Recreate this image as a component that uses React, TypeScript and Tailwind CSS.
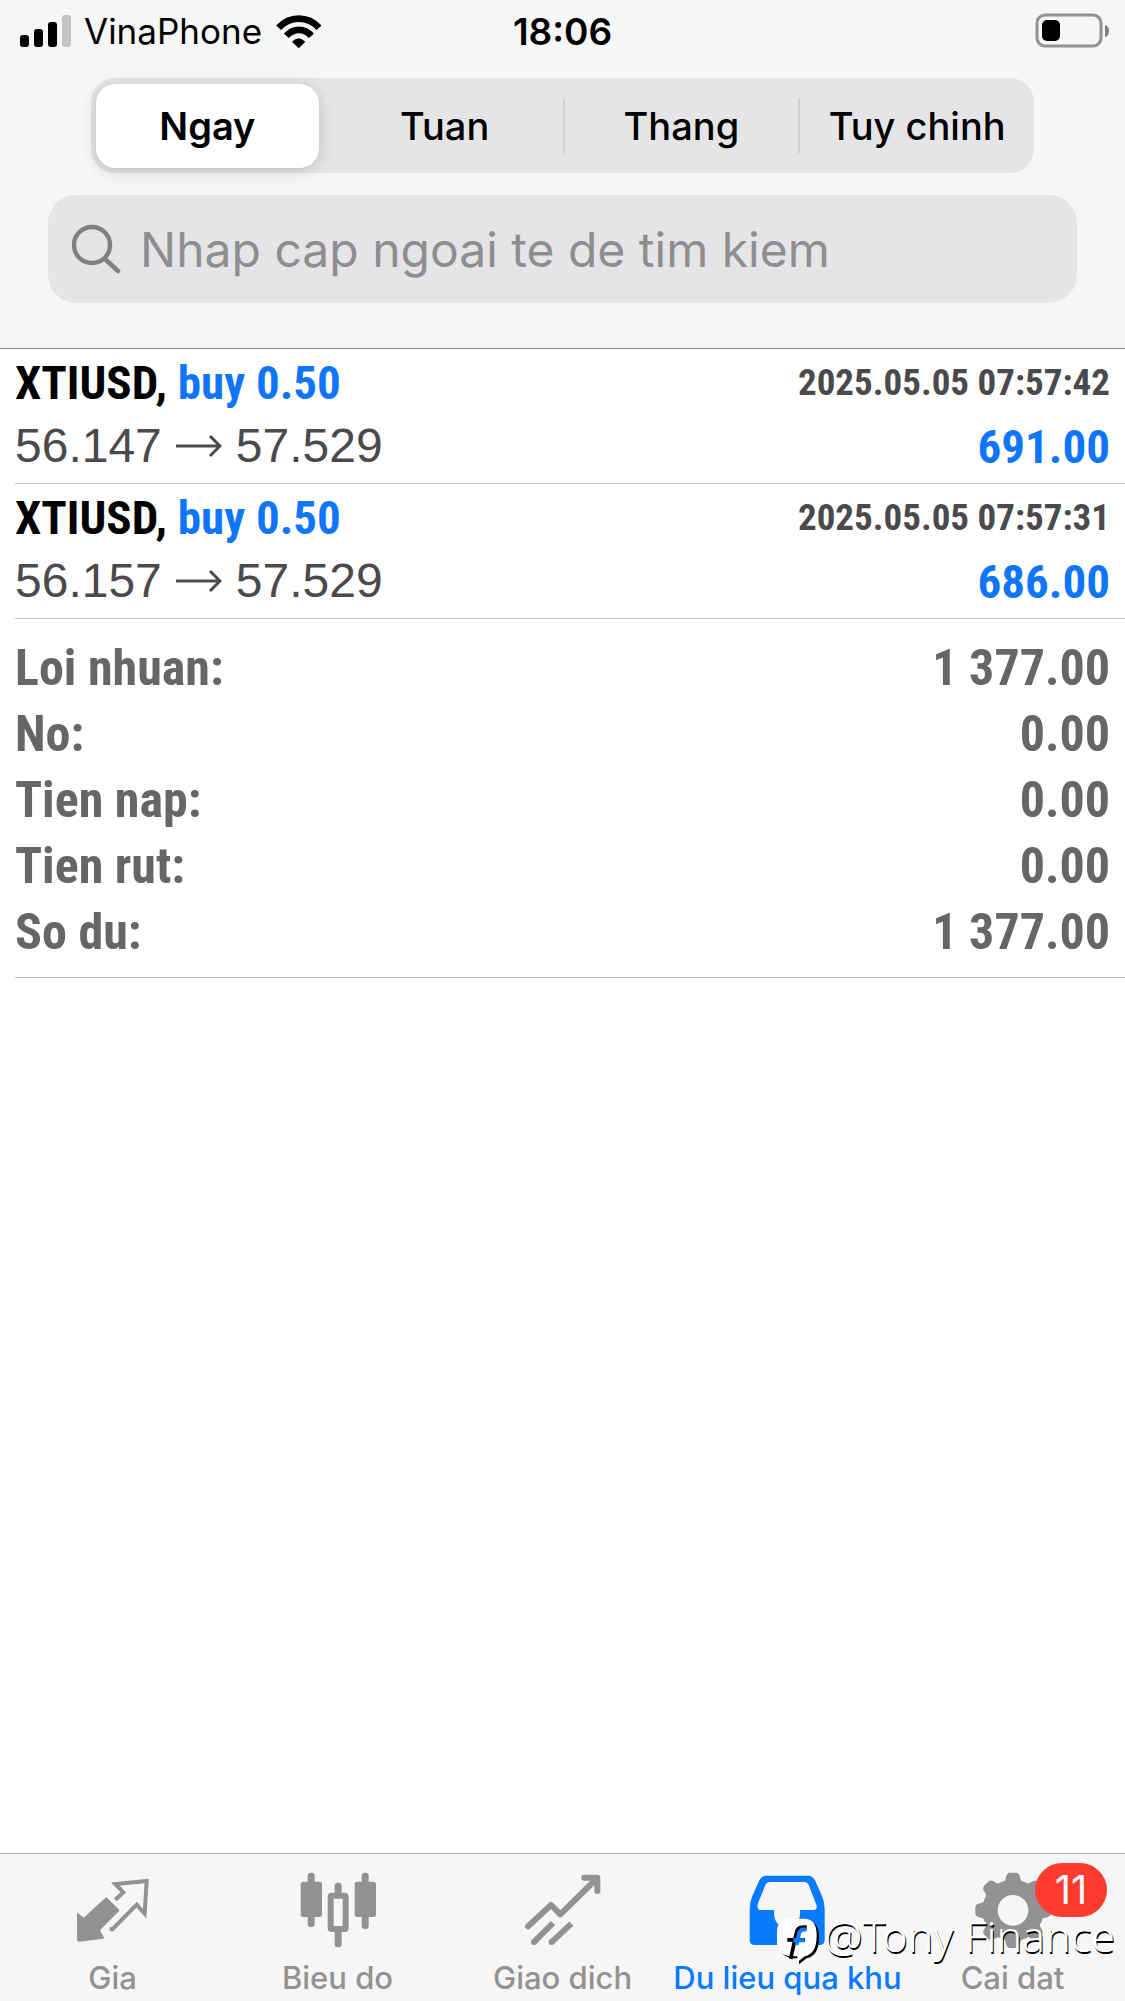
import React, { useState } from 'react';

const periods = ['Ngay', 'Tuan', 'Thang', 'Tuy chinh'];

const trades = [
  {
    symbol: 'XTIUSD',
    side: 'buy 0.50',
    open: '56.147',
    close: '57.529',
    time: '2025.05.05 07:57:42',
    profit: '691.00',
  },
  {
    symbol: 'XTIUSD',
    side: 'buy 0.50',
    open: '56.157',
    close: '57.529',
    time: '2025.05.05 07:57:31',
    profit: '686.00',
  },
];

const summary = [
  { label: 'Loi nhuan:', value: '1 377.00' },
  { label: 'No:', value: '0.00' },
  { label: 'Tien nap:', value: '0.00' },
  { label: 'Tien rut:', value: '0.00' },
  { label: 'So du:', value: '1 377.00' },
];

const QuotesIcon = () => (
  <svg viewBox="216 90 240 240" className="size-20" aria-hidden="true">
    <path
      d="M316 175L352 211L298 265Q292 271 298 280L306 293L234 302Q231 302 231 299V223L243 233Q249 237 254 232Z"
      fill="currentColor"
      stroke="currentColor"
      strokeWidth="6"
      strokeLinejoin="round"
    />
    <path
      d="M343 179L367 157L343 132L437 123L431 221L407 194L334 268L326 267"
      fill="none"
      stroke="currentColor"
      strokeWidth="12"
    />
  </svg>
);

const ChartIcon = () => (
  <svg viewBox="892 90 240 240" className="size-20" aria-hidden="true">
    <g fill="currentColor">
      <rect x="921" y="98" width="21" height="163" rx="9" />
      <rect x="900" y="125" width="64" height="106" rx="8" />
      <rect x="1083" y="98" width="21" height="169" rx="9" />
      <rect x="1062" y="125" width="64" height="106" rx="8" />
      <rect x="1002" y="128" width="21" height="46" rx="9" />
      <rect x="1002" y="262" width="21" height="60" rx="9" />
    </g>
    <rect
      x="990"
      y="167"
      width="45"
      height="100"
      rx="3"
      fill="none"
      stroke="currentColor"
      strokeWidth="18"
    />
  </svg>
);

const TradeIcon = () => (
  <svg viewBox="128 90 240 240" className="size-20" aria-hidden="true">
    <g fill="none" stroke="currentColor" strokeWidth="18">
      <path
        d="M143 259L212 195L240 223L345 120"
        strokeLinecap="round"
        strokeLinejoin="round"
      />
      <path d="M312 113H351V153" strokeLinecap="round" strokeLinejoin="round" />
      <path d="M160 307L218 249M213 307L273 251" />
    </g>
    <path d="M325 108H356V140Z" fill="currentColor" />
    <circle cx="161" cy="306" r="9" fill="currentColor" />
    <circle cx="214" cy="306" r="9" fill="currentColor" />
  </svg>
);

const HistoryIcon = () => (
  <svg viewBox="82 90 240 240" className="size-20" aria-hidden="true">
    <path
      fill="currentColor"
      fillRule="evenodd"
      d="M137 107H262Q276 107 283 121L304 168Q312 186 312 207V300Q312 315 297 315H102Q87 315 87 300V207Q87 186 95 168L116 121Q123 107 137 107ZM148 126Q138 126 134 136L112 190Q107 210 121 210H160V220C160 250 181 264 199 264S238 250 238 220V210H278Q292 210 287 194L265 137Q261 126 251 126Z"
    />
  </svg>
);

const teeth = [0, 45, 90, 135, 180, 225, 270, 315];

const SettingsIcon = () => (
  <svg viewBox="757 90 240 240" className="size-20" aria-hidden="true">
    <circle
      cx="877"
      cy="211"
      r="69"
      fill="none"
      stroke="currentColor"
      strokeWidth="46"
    />
    <g fill="currentColor">
      {teeth.map((angle) => (
        <path
          key={angle}
          d="M838 135Q852 130 855 115Q858 98 867 98H887Q896 98 899 115Q902 130 916 135L900 160H854Z"
          transform={`rotate(${angle} 877 211)`}
        />
      ))}
    </g>
  </svg>
);

const tabs = [
  { label: 'Gia', icon: QuotesIcon, tone: 'text-[#929292]' },
  { label: 'Bieu do', icon: ChartIcon, tone: 'text-[#929292]' },
  { label: 'Giao dich', icon: TradeIcon, tone: 'text-[#929292]' },
  { label: 'Du lieu qua khu', icon: HistoryIcon, tone: 'text-[#0a7aff]' },
  { label: 'Cai dat', icon: SettingsIcon, tone: 'text-[#929292]', badge: 11 },
];

const StatusBar = () => (
  <div className="grid h-[62px] grid-cols-3 items-center px-4 leading-none">
    <div className="flex items-center pl-1">
      <svg viewBox="0 0 52 34" className="h-[34px] w-[52px]" aria-hidden="true">
        <rect x="0" y="21" width="9" height="12" rx="3" />
        <rect x="14" y="15" width="9" height="18" rx="3" />
        <rect x="28" y="8" width="9" height="25" rx="3" />
        <rect x="42" y="1" width="9" height="32" rx="3" fill="#c4c4c4" />
      </svg>
      <span className="ml-3 text-[35px]">VinaPhone</span>
      <svg
        viewBox="829 36 138 104"
        className="ml-3.5 h-[35px] w-[46px]"
        aria-hidden="true"
      >
        <g fill="none" stroke="#000" strokeWidth="20">
          <path d="M837 77C870 40 925 40 958 77" />
          <path d="M860 101C882 77 914 77 935 101" />
        </g>
        <path d="M877 119Q897 98 917 119L897 138Z" />
      </svg>
    </div>
    <span className="text-center text-[37px] font-semibold">18:06</span>
    <svg
      viewBox="0 0 74 36"
      className="h-9 w-[74px] justify-self-end"
      aria-hidden="true"
    >
      <rect
        x="2"
        y="2"
        width="64"
        height="31"
        rx="8"
        fill="none"
        stroke="#929292"
        strokeWidth="3"
      />
      <rect x="7" y="7" width="18" height="21" rx="5" />
      <path d="M70 12Q74 13 74 18T70 24Z" fill="#808080" />
    </svg>
  </div>
);

const App: React.FC = () => {
  const [period, setPeriod] = useState('Ngay');

  return (
    <div className="relative flex min-h-screen flex-col bg-white font-['Inter',sans-serif] text-black">
      <header className="border-b border-[#8e8e90] bg-[#f6f6f6] pb-[45px]">
        <StatusBar />

        {/* Period switch */}
        <div className="mx-[91px] mt-4 grid h-[95px] grid-cols-4 rounded-[24px] bg-[#e5e5e7]">
          {periods.map((name, index) => (
            <div
              key={name}
              className={`flex items-center ${
                index > 1 ? 'before:h-[54px] before:w-0.5 before:bg-[#cfcfd2]' : ''
              }`}
            >
              <button
                type="button"
                onClick={() => setPeriod(name)}
                className={`flex-1 whitespace-nowrap text-[38px] leading-none ${
                  period === name
                    ? 'ml-[5px] mr-2 h-[84px] rounded-[20px] bg-white font-semibold shadow-[0_3px_16px_rgba(0,0,0,0.16)]'
                    : 'h-full font-medium'
                }`}
              >
                {name}
              </button>
            </div>
          ))}
        </div>

        {/* Symbol search */}
        <label className="mx-12 mt-[22px] flex h-[108px] items-center rounded-[28px] bg-[#e5e5e7] pl-6">
          <svg
            viewBox="0 0 50 50"
            className="size-[50px] shrink-0"
            fill="none"
            stroke="#808082"
            strokeWidth="4.5"
            strokeLinecap="round"
            aria-hidden="true"
          >
            <circle cx="20" cy="21" r="18" />
            <path d="M33 35L46 47" />
          </svg>
          <input
            type="search"
            aria-label="Nhap cap ngoai te de tim kiem"
            placeholder="Nhap cap ngoai te de tim kiem"
            className="ml-[18px] min-w-0 flex-1 bg-transparent text-[48px] leading-none outline-none placeholder:text-[#8e8e90]"
          />
        </label>
      </header>

      <main className="flex-1">
        <ul>
          {trades.map((trade) => (
            <li
              key={trade.time}
              className="ml-[15px] h-[135px] border-b border-[#c4c5c7] pr-[15px] pt-0.5 font-['Liberation_Sans',sans-serif]"
            >
              <div className="flex h-[62px] items-center justify-between font-['Roboto_Condensed','Liberation_Sans',sans-serif] font-bold">
                <h2 className="text-[47px] leading-none">
                  {trade.symbol},{' '}
                  <span className="text-[#0f76fb]">{trade.side}</span>
                </h2>
                <time className="text-[37px] leading-none text-[#4a4a4d]">
                  {trade.time}
                </time>
              </div>
              <div className="flex h-[66px] items-center justify-between text-[48px] leading-none">
                <p className="flex items-center text-[#4a4a4d]">
                  {trade.open}
                  <svg
                    viewBox="0 0 46 24"
                    className="mx-3.5 h-6 w-[46px]"
                    fill="none"
                    stroke="currentColor"
                    strokeWidth="3"
                    aria-hidden="true"
                  >
                    <path d="M0 12H43M34 2L44 12L34 22" />
                  </svg>
                  {trade.close}
                </p>
                <span className="font-['Roboto_Condensed','Liberation_Sans',sans-serif] text-[47px] font-bold text-[#0f76fb]">
                  {trade.profit}
                </span>
              </div>
            </li>
          ))}
        </ul>

        {/* Account totals */}
        <dl className="ml-[15px] border-b border-[#c4c5c7] pb-3 pr-[15px] pt-4 font-['Roboto_Condensed','Liberation_Sans',sans-serif] text-[50px] font-bold leading-[66px] text-[#666666]">
          {summary.map((item) => (
            <div key={item.label} className="flex justify-between">
              <dt>{item.label}</dt>
              <dd>{item.value}</dd>
            </div>
          ))}
        </dl>
      </main>

      <nav className="grid h-[148px] grid-cols-5 border-t border-[#b0b0b2] bg-[#f6f6f6]">
        {tabs.map((tab) => (
          <button
            key={tab.label}
            type="button"
            className={`relative flex flex-col items-center pt-4 ${tab.tone}`}
          >
            <tab.icon />
            <span className="mt-2.5 whitespace-nowrap text-[31px] font-medium leading-9">
              {tab.label}
            </span>
            {tab.badge && (
              <span className="absolute right-[18px] top-[9px] flex h-[54px] w-[72px] items-center justify-center rounded-full bg-[#ff3b30] text-[40px] leading-none text-white">
                {tab.badge}
              </span>
            )}
          </button>
        ))}
      </nav>

      {/* Author watermark */}
      <div className="pointer-events-none absolute bottom-8 right-2.5 flex items-center">
        <svg viewBox="30 204 132 140" className="h-[47px] w-[44px]" aria-hidden="true">
          <path
            d="M78 212H124Q159 214 159 262Q159 318 122 324L99 342V324H82Q40 320 40 280V250Q40 214 78 212Z"
            fill="#000"
          />
          <path
            d="M74 206H118Q152 208 152 256Q152 312 116 318L94 336V318H74Q33 314 33 274V244Q33 208 74 206Z"
            fill="#fff"
          />
          <path
            d="M122 231H112Q94 231 91 248L74 326M64 269H117"
            fill="none"
            stroke="#000"
            strokeWidth="11"
          />
          <path
            d="M122 238H114Q102 238 99 250L92 284M82 270H116"
            fill="none"
            stroke="#0a7aff"
            strokeWidth="12"
          />
        </svg>
        <span className="ml-1 pb-3 font-['Noto_Sans','Open_Sans',sans-serif] text-[43px] font-light leading-none text-white [text-shadow:1px_2px_0_#000]">
          @Tony Finance
        </span>
      </div>
    </div>
  );
};

export default App;
